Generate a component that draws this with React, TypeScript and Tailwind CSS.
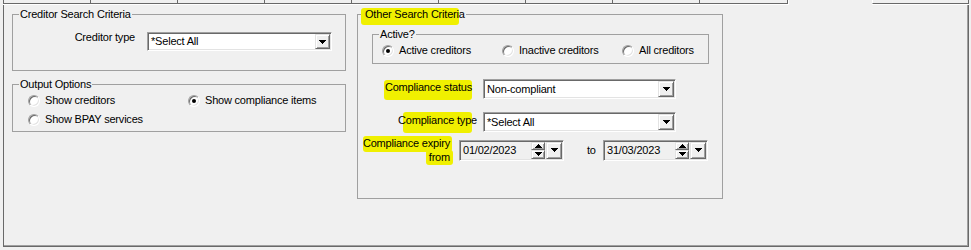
const RAISED =
  "flex items-center justify-center bg-[#f0f0f0] border border-t-[#e3e3e3] border-l-[#e3e3e3] border-b-[#696969] border-r-[#696969] shadow-[inset_1px_1px_0_#fff,inset_-1px_-1px_0_#a0a0a0]";
const SUNKEN =
  "flex items-stretch border border-t-[#a0a0a0] border-l-[#a0a0a0] border-b-white border-r-white shadow-[inset_1px_1px_0_#696969,inset_-1px_-1px_0_#e3e3e3] p-[1px]";
const GROUP = "border border-[#a0a0a0]";

function Arrow({ up = false, size = 7 }: { up?: boolean; size?: number }) {
  const h = (size + 1) / 2;
  return (
    <svg width={size} height={h} shapeRendering="crispEdges">
      {Array.from({ length: h }, (_, i) => (
        <rect key={i} x={i} y={up ? h - 1 - i : i} width={size - 2 * i} height={1} fill="#000" />
      ))}
    </svg>
  );
}

function Combo({ value, className, btn }: { value: string; className: string; btn: string }) {
  return (
    <div className={`${SUNKEN} bg-white ${className}`}>
      <span className="flex-1 pl-[2px] flex items-center">{value}</span>
      <div className={`${RAISED} ${btn}`}>
        <Arrow />
      </div>
    </div>
  );
}

function DateBox({ value }: { value: string }) {
  return (
    <div className={`${SUNKEN} bg-[#f0f0f0] w-[105px] h-[21px]`}>
      <span className="flex-1 pl-[2px] flex items-center">{value}</span>
      <div className="w-[14px] flex flex-col">
        <div className={`${RAISED} flex-1`}>
          <Arrow up />
        </div>
        <div className={`${RAISED} flex-1`}>
          <Arrow />
        </div>
      </div>
      <div className={`${RAISED} w-[16px] ml-[1px]`}>
        <Arrow />
      </div>
    </div>
  );
}

function Radio({ label, checked = false }: { label: string; checked?: boolean }) {
  return (
    <div className="flex items-center gap-[5px] h-[13px]">
      <span className="w-[12px] h-[12px] shrink-0 rounded-full bg-white border border-t-[#a0a0a0] border-l-[#a0a0a0] border-b-white border-r-white shadow-[inset_1px_1px_0_#696969,inset_-1px_-1px_0_#e3e3e3] flex items-center justify-center">
        {checked && <span className="w-[4px] h-[4px] rounded-full bg-black" />}
      </span>
      <span>{label}</span>
    </div>
  );
}

function TabStrip() {
  return (
    <div className="flex h-[5px]">
      <div className="w-[88px] h-[5px] border-b border-white">
        <div className="h-[4px] border-l border-r border-b border-[#696969]" />
      </div>
      {[1, 2, 3, 4, 5, 6, 7].map((i) => (
        <div key={i} className="w-[87px] h-[5px] border-b border-white">
          <div className="h-[4px] border-r border-b border-[#696969]" />
        </div>
      ))}
      <div className="w-[88px] h-[5px] border-b border-white">
        <div className="h-[4px] border-r border-b border-[#696969]" />
      </div>
      <div className="w-[84px] h-[5px] border-l border-white" />
      <div className="w-[97px] h-[5px] border-b border-white">
        <div className="h-[4px] border-l border-white border-r border-b border-r-[#696969] border-b-[#696969]" />
      </div>
    </div>
  );
}

export default function App() {
  return (
    <div className="w-[971px] h-[250px] bg-[#f0f0f0] pl-[3px] text-[11px] leading-[13px] text-black tracking-[-0.2px] font-['Liberation_Sans',Arial,sans-serif] overflow-hidden">
      <TabStrip />
      <div className="w-[966px] h-[242px] border-l border-r border-b border-[#696969] shadow-[inset_-1px_-1px_0_#a0a0a0] flex items-start pl-[8px] pt-[3px]">
        {/* left column */}
        <div className="w-[334px] flex flex-col">
          <fieldset className={`${GROUP} h-[63px]`}>
            <legend className="ml-[6px] px-[1px]">Creditor Search Criteria</legend>
            <div className="flex items-start mt-[10px]">
              <span className="w-[122px] text-right">Creditor type</span>
              <Combo value="*Select All" className="ml-[12px] mt-[1px] w-[185px] h-[19px]" btn="w-[15px]" />
            </div>
          </fieldset>
          <fieldset className={`${GROUP} mt-[7px] h-[54px]`}>
            <legend className="ml-[6px] px-[1px]">Output Options</legend>
            <div className="grid grid-cols-[160px_1fr] gap-y-[6px] pl-[15px] mt-[3px]">
              <Radio label="Show creditors" />
              <Radio label="Show compliance items" checked />
              <Radio label="Show BPAY services" />
            </div>
          </fieldset>
        </div>

        {/* right column */}
        <fieldset className={`${GROUP} ml-[11px] w-[366px] h-[191px]`}>
          <legend className="ml-[6px] px-[1px] relative">
            <span className="absolute left-[-3px] top-0 w-[98px] h-[17px] bg-[#f0f000] rounded-[3px]" />
            <span className="relative">Other Search Criteria</span>
          </legend>
          <fieldset className={`${GROUP} ml-[14px] mt-[7px] w-[337px] h-[36px]`}>
            <legend className="ml-[6px] px-[1px]">Active?</legend>
            <div className="grid grid-cols-[120px_120px_1fr] pl-[9px] mt-[3px]">
              <Radio label="Active creditors" checked />
              <Radio label="Inactive creditors" />
              <Radio label="All creditors" />
            </div>
          </fieldset>

          <div className="flex items-start mt-[15px]">
            <div className="w-[114px] mt-[2px] flex justify-end">
              <span className="relative">
                <span className="absolute left-[-1px] right-0 top-[-1px] bottom-[-6px] bg-[#f0f000] rounded-[3px]" />
                <span className="relative">Compliance status</span>
              </span>
            </div>
            <Combo value="Non-compliant" className="ml-[11px] w-[193px] h-[20px]" btn="w-[16px]" />
          </div>

          <div className="flex items-start mt-[13px]">
            <div className="w-[119px] mt-[2px] flex justify-end">
              <span className="relative">
                <span className="absolute left-[5px] right-[5px] top-[-2px] bottom-[-6px] bg-[#f0f000] rounded-[3px]" />
                <span className="relative">Compliance type</span>
              </span>
            </div>
            <Combo value="*Select All" className="ml-[6px] w-[193px] h-[20px]" btn="w-[16px]" />
          </div>

          <div className="flex items-center mt-[4px]">
            <div className="relative w-[92px] text-right leading-[14px]">
              <span className="absolute left-[5px] w-[89px] top-0 h-[16px] bg-[#f0f000] rounded-[3px]" />
              <span className="absolute left-[68px] w-[27px] top-[14px] h-[15px] bg-[#f0f000] rounded-[3px]" />
              <span className="relative">
                Compliance expiry
                <br />
                from
              </span>
            </div>
            <div className="ml-[9px]">
              <DateBox value="01/02/2023" />
            </div>
            <span className="ml-[23px] w-[16px]">to</span>
            <DateBox value="31/03/2023" />
          </div>
        </fieldset>
      </div>
    </div>
  );
}
